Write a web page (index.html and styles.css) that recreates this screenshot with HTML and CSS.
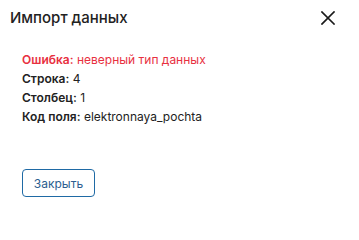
FILE: index.html
```html
<!DOCTYPE html>
<html lang="ru">
<head>
<meta charset="utf-8">
<link rel="stylesheet" href="styles.css">
</head>
<body>
<div class="dialog">
  <div class="header">
    <div class="title">Импорт данных</div>
    <button class="close" aria-label="Закрыть">
      <svg width="14" height="14" viewBox="0 0 14 14"><path d="M1 1L13 13M13 1L1 13" stroke="#1a1a1a" stroke-width="1.7" stroke-linecap="square"/></svg>
    </button>
  </div>
  <div class="content">
    <div class="line error"><b>Ошибка:</b> неверный тип данных</div>
    <div class="line"><b>Строка:</b> 4</div>
    <div class="line"><b>Столбец:</b> 1</div>
    <div class="line"><b>Код поля:</b> elektronnaya_pochta</div>
  </div>
  <div class="footer">
    <button class="btn">Закрыть</button>
  </div>
</div>
</body>
</html>
```
FILE: styles.css
```css
html, body { margin: 0; padding: 0; background: #fff; }
body { font-family: Inter, "Noto Sans", sans-serif; color: #222; }
.dialog { width: 359px; height: 208px; box-sizing: border-box; display: flex; flex-direction: column; }
.header { display: flex; align-items: center; justify-content: space-between; padding: 8px 24px 0 10px; height: 20px; }
.title { font-size: 15px; line-height: 20px; font-weight: 500; color: #222; }
.close { border: 0; background: none; padding: 0; width: 14px; height: 14px; display: flex; margin-top: 0; }
.content { padding: 22px 0 0 22px; font-size: 12px; line-height: 19px; }
.line b { font-weight: 600; }
.error { color: #e8303f; }
.footer { padding: 43px 0 0 22px; }
.btn { font-family: Inter, "Noto Sans", sans-serif; font-size: 12px; width: 73px; height: 28px; border: 1.5px solid #1f6aa5; border-radius: 4px; background: #fff; color: #2b5e90; padding: 0; }
```
